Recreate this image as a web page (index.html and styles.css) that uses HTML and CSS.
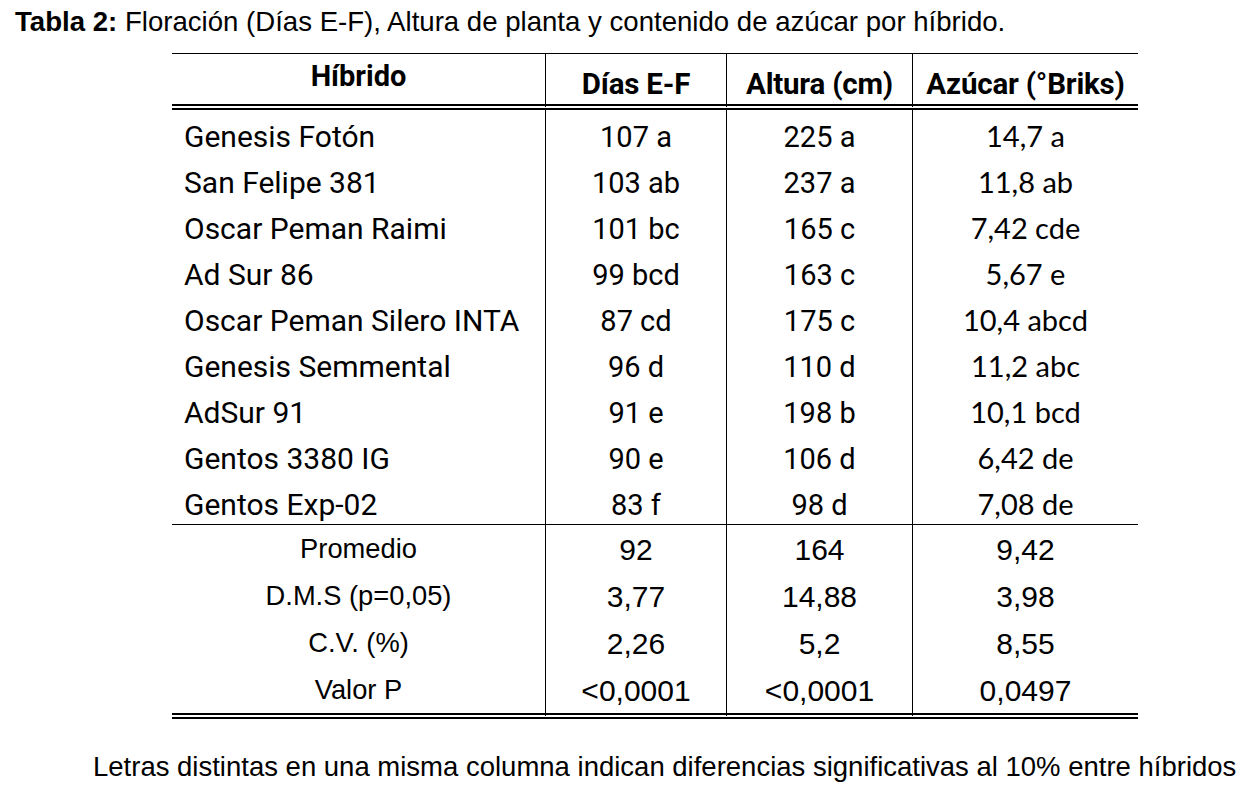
FILE: index.html
```html
<!DOCTYPE html>
<html lang="es">
<head>
<meta charset="utf-8">
<title>Tabla 2</title>
<link rel="stylesheet" href="styles.css">
</head>
<body>
<main class="page">
  <p class="caption"><b>Tabla 2:</b> Floración (Días E-F), Altura de planta y contenido de azúcar por híbrido.</p>
  <table class="data">
    <colgroup>
      <col class="c1"><col class="c2"><col class="c3"><col class="c4">
    </colgroup>
    <thead>
      <tr>
        <th class="h-name">Híbrido</th>
        <th class="h-num">Días E-F</th>
        <th class="h-num">Altura (cm)</th>
        <th class="h-num">Azúcar (°Briks)</th>
      </tr>
    </thead>
    <tbody class="rows">
      <tr><td class="name">Genesis Fotón</td><td class="num">107 a</td><td class="num">225 a</td><td class="num alt">14,7 a</td></tr>
      <tr><td class="name">San Felipe 381</td><td class="num">103 ab</td><td class="num">237 a</td><td class="num alt">11,8 ab</td></tr>
      <tr><td class="name">Oscar Peman Raimi</td><td class="num">101 bc</td><td class="num">165 c</td><td class="num alt">7,42 cde</td></tr>
      <tr><td class="name">Ad Sur 86</td><td class="num">99 bcd</td><td class="num">163 c</td><td class="num alt">5,67 e</td></tr>
      <tr><td class="name">Oscar Peman Silero INTA</td><td class="num">87 cd</td><td class="num">175 c</td><td class="num alt">10,4 abcd</td></tr>
      <tr><td class="name">Genesis Semmental</td><td class="num">96 d</td><td class="num">110 d</td><td class="num alt">11,2 abc</td></tr>
      <tr><td class="name">AdSur 91</td><td class="num">91 e</td><td class="num">198 b</td><td class="num alt">10,1 bcd</td></tr>
      <tr><td class="name">Gentos 3380 IG</td><td class="num">90 e</td><td class="num">106 d</td><td class="num alt">6,42 de</td></tr>
      <tr class="last"><td class="name">Gentos Exp-02</td><td class="num">83 f</td><td class="num">98 d</td><td class="num alt">7,08 de</td></tr>
    </tbody>
    <tbody class="stats">
      <tr><td class="label">Promedio</td><td class="snum">92</td><td class="snum">164</td><td class="snum">9,42</td></tr>
      <tr><td class="label">D.M.S (p=0,05)</td><td class="snum">3,77</td><td class="snum">14,88</td><td class="snum">3,98</td></tr>
      <tr><td class="label">C.V. (%)</td><td class="snum">2,26</td><td class="snum">5,2</td><td class="snum">8,55</td></tr>
      <tr class="end"><td class="label">Valor P</td><td class="snum">&lt;0,0001</td><td class="snum">&lt;0,0001</td><td class="snum">0,0497</td></tr>
    </tbody>
  </table>
  <p class="note">Letras distintas en una misma columna indican diferencias significativas al 10% entre híbridos</p>
</main>
</body>
</html>
```
FILE: styles.css
```css
html, body {
  margin: 0;
  padding: 0;
  background: #ffffff;
  color: #000000;
}

.page {
  width: 1254px;
  height: 805px;
  overflow: hidden;
  font-family: "Liberation Sans", Arial, sans-serif;
}

.caption {
  margin: 0;
  padding: 6px 0 0 15px;
  font-size: 27.6px;
  line-height: 32px;
  white-space: nowrap;
}

.caption b {
  font-weight: 700;
}

.data {
  margin: 15px 0 0 172px;
  width: 966px;
  border-collapse: separate;
  border-spacing: 0;
  table-layout: fixed;
}

.c1 { width: 373px; }
.c2 { width: 181px; }
.c3 { width: 186px; }
.c4 { width: 226px; }

.data th,
.data td {
  padding: 0;
  border-left: 1px solid #000;
  vertical-align: middle;
  text-align: center;
  line-height: 32px;
  white-space: nowrap;
}

.data th:first-child,
.data td:first-child {
  border-left: none;
}

.data thead tr {
  height: 57px;
}

.data th {
  border-top: 1px solid #000;
  border-bottom: 6px double #000;
  font-family: Roboto, sans-serif;
  font-weight: 700;
  font-size: 29px;
}

.data .h-name {
  padding-bottom: 6px;
}

.data .h-num {
  padding-top: 9px;
  font-size: 29.5px;
  letter-spacing: -0.2px;
}

.rows tr {
  height: 46px;
}

.rows tr.last {
  height: 47px;
}

.rows td {
  padding-top: 8px;
}

.rows td.alt {
  padding-top: 5px;
}

.rows .last td {
  border-bottom: 1px solid #000;
}

.data .name {
  text-align: left;
  padding-left: 12px;
  font-family: Roboto, sans-serif;
  font-size: 30px;
}

.num {
  font-family: Roboto, sans-serif;
  font-size: 29px;
}

.num.alt {
  font-family: Lato, sans-serif;
}

.stats tr {
  height: 47px;
}

.stats td {
  padding-top: 3px;
}

.stats tr.end {
  height: 53px;
}

.stats .end td {
  border-bottom: 6px double #000;
}

.label {
  font-size: 27.3px;
}

.stats td.label {
  padding-top: 0;
}

.snum {
  font-size: 30px;
}

.note {
  margin: 32px 0 0 93px;
  font-size: 27.5px;
  line-height: 32px;
  white-space: nowrap;
}
```
